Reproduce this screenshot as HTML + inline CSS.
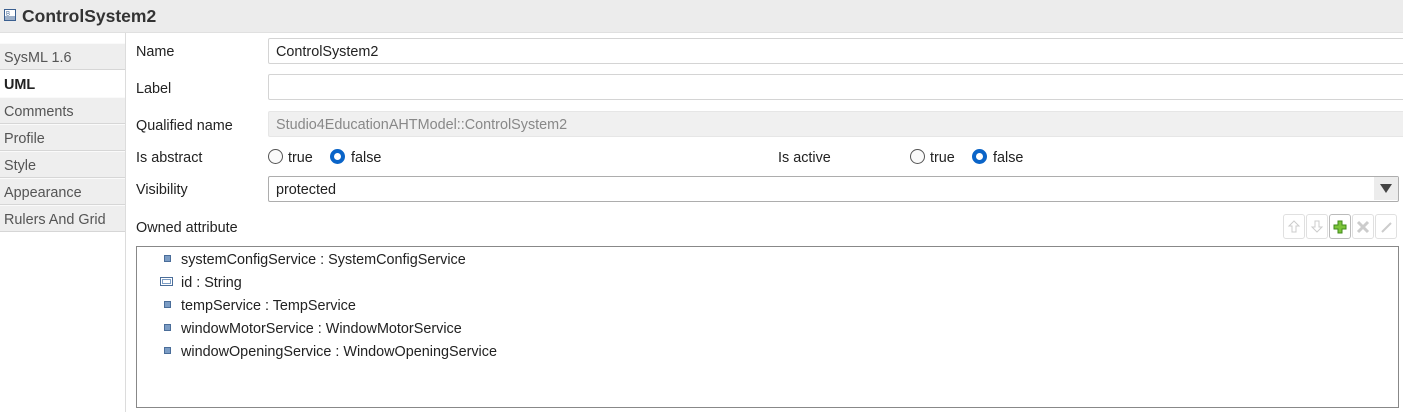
<!DOCTYPE html>
<html><head><style>
*{box-sizing:border-box;margin:0;padding:0}
body{width:1403px;height:412px;background:#fff;font-family:"Liberation Sans",sans-serif;font-size:14.4px;line-height:18px;color:#222;position:relative;overflow:hidden}
.a{position:absolute}
.title{left:0;top:0;width:1403px;height:33px;background:#ececec;border-bottom:1px solid #e0e0e0}
.title span{position:absolute;left:22px;top:6px;font-weight:bold;font-size:17.5px;line-height:21px;color:#333}
.tab{position:absolute;left:0;width:125px;height:27px;background:#eeeeee;border-bottom:1px solid #d6d6d6;border-top:1px solid #fafafa;color:#555;padding:5px 0 0 4px;font-size:14.4px}
.tab.sel{background:#fff;color:#222;font-weight:bold;border:none;padding-top:6px}
.lbl{position:absolute;left:136px;color:#222;padding-top:1px}
.t{padding-top:1px}
.inp{position:absolute;left:268px;width:1140px;height:26px;border:1px solid #d4d4d4;border-radius:2px;padding:4px 0 0 7px}
.radio{position:absolute;width:15px;height:15px;border-radius:50%;border:1px solid #555;background:#fafafa}
.radio.on{border:4px solid #0a64c8;background:#fff}
.btn{position:absolute;top:214px;width:22px;height:25px;border:1px solid #e0e0e0;border-radius:3px;background:#fff}
.item{position:absolute;left:181px;padding-top:1px}
.ic{position:absolute;left:164px;width:7px;height:7px;background:#7b9cc4;border:1px solid #4a6d99}
</style></head><body>
<div class="a title"><svg class="a" style="left:3px;top:8px" width="14" height="14"><rect x="1.5" y="1.5" width="11" height="11" fill="#fff" stroke="#3a5f90"/><line x1="2" y1="9" x2="12" y2="9" stroke="#3a5f90"/><line x1="2" y1="11" x2="12" y2="11" stroke="#3a5f90"/><text x="3" y="7.5" font-size="6" fill="#3a5f90" font-family="Liberation Sans">B</text></svg><span>ControlSystem2</span></div>
<div class="a" style="left:125px;top:33px;width:1px;height:379px;background:#dcdcdc"></div>
<div class="tab" style="top:43px">SysML 1.6</div>
<div class="tab sel" style="top:70px">UML</div>
<div class="tab" style="top:97px">Comments</div>
<div class="tab" style="top:124px">Profile</div>
<div class="tab" style="top:151px">Style</div>
<div class="tab" style="top:178px">Appearance</div>
<div class="tab" style="top:205px">Rulers And Grid</div>

<div class="lbl" style="top:42px">Name</div>
<div class="inp" style="top:38px">ControlSystem2</div>
<div class="lbl" style="top:79px">Label</div>
<div class="inp" style="top:74px"></div>
<div class="lbl" style="top:116px">Qualified name</div>
<div class="inp" style="top:111px;background:#f0f0f0;color:#888;border-color:#e6e6e6">Studio4EducationAHTModel::ControlSystem2</div>
<div class="lbl" style="top:148px">Is abstract</div>
<div class="radio" style="left:268px;top:149px"></div><div class="a t" style="left:288px;top:148px">true</div>
<div class="radio on" style="left:330px;top:149px"></div><div class="a t" style="left:351px;top:148px">false</div>
<div class="a t" style="left:778px;top:148px">Is active</div>
<div class="radio" style="left:910px;top:149px"></div><div class="a t" style="left:930px;top:148px">true</div>
<div class="radio on" style="left:972px;top:149px"></div><div class="a t" style="left:993px;top:148px">false</div>
<div class="lbl" style="top:180px">Visibility</div>
<div class="inp" style="top:176px;width:1131px;border-color:#adadad">protected</div>
<div class="a" style="left:1374px;top:177px;width:24px;height:23px;background:#ececec"></div>
<svg class="a" style="left:1380px;top:184px" width="12" height="9"><path d="M0 0H12L6 9Z" fill="#444"/></svg>
<div class="lbl" style="top:218px">Owned attribute</div>
<div class="btn" style="left:1283px"><svg width="20" height="23"><path d="M10 6L5 11H8V17H12V11H15Z" fill="none" stroke="#ccc"/></svg></div>
<div class="btn" style="left:1306px"><svg width="20" height="23"><path d="M10 17L5 12H8V6H12V12H15Z" fill="none" stroke="#ccc"/></svg></div>
<div class="btn" style="left:1329px;border-color:#bbb"><svg width="20" height="23"><path d="M8 6H12V10H16V14H12V18H8V14H4V10H8Z" fill="#7cc43a" stroke="#3f8a1a"/></svg></div>
<div class="btn" style="left:1352px"><svg width="20" height="23"><path d="M5 7L15 17M15 7L5 17" stroke="#ccc" stroke-width="3"/></svg></div>
<div class="btn" style="left:1375px"><svg width="20" height="23"><path d="M6 17L15 8" stroke="#ccc" stroke-width="2"/></svg></div>
<div class="a" style="left:136px;top:246px;width:1263px;height:162px;border:1px solid #888"></div>
<div class="ic" style="top:255px"></div><div class="item" style="top:250px">systemConfigService : SystemConfigService</div>
<div class="a" style="left:160px;top:277px;width:13px;height:9px;border:1px solid #4a6d99;background:#fff"><div style="margin:1px;height:5px;border:1px solid #7b9cc4"></div></div><div class="item" style="top:273px">id : String</div>
<div class="ic" style="top:301px"></div><div class="item" style="top:296px">tempService : TempService</div>
<div class="ic" style="top:324px"></div><div class="item" style="top:319px">windowMotorService : WindowMotorService</div>
<div class="ic" style="top:347px"></div><div class="item" style="top:342px">windowOpeningService : WindowOpeningService</div>
</body></html>
